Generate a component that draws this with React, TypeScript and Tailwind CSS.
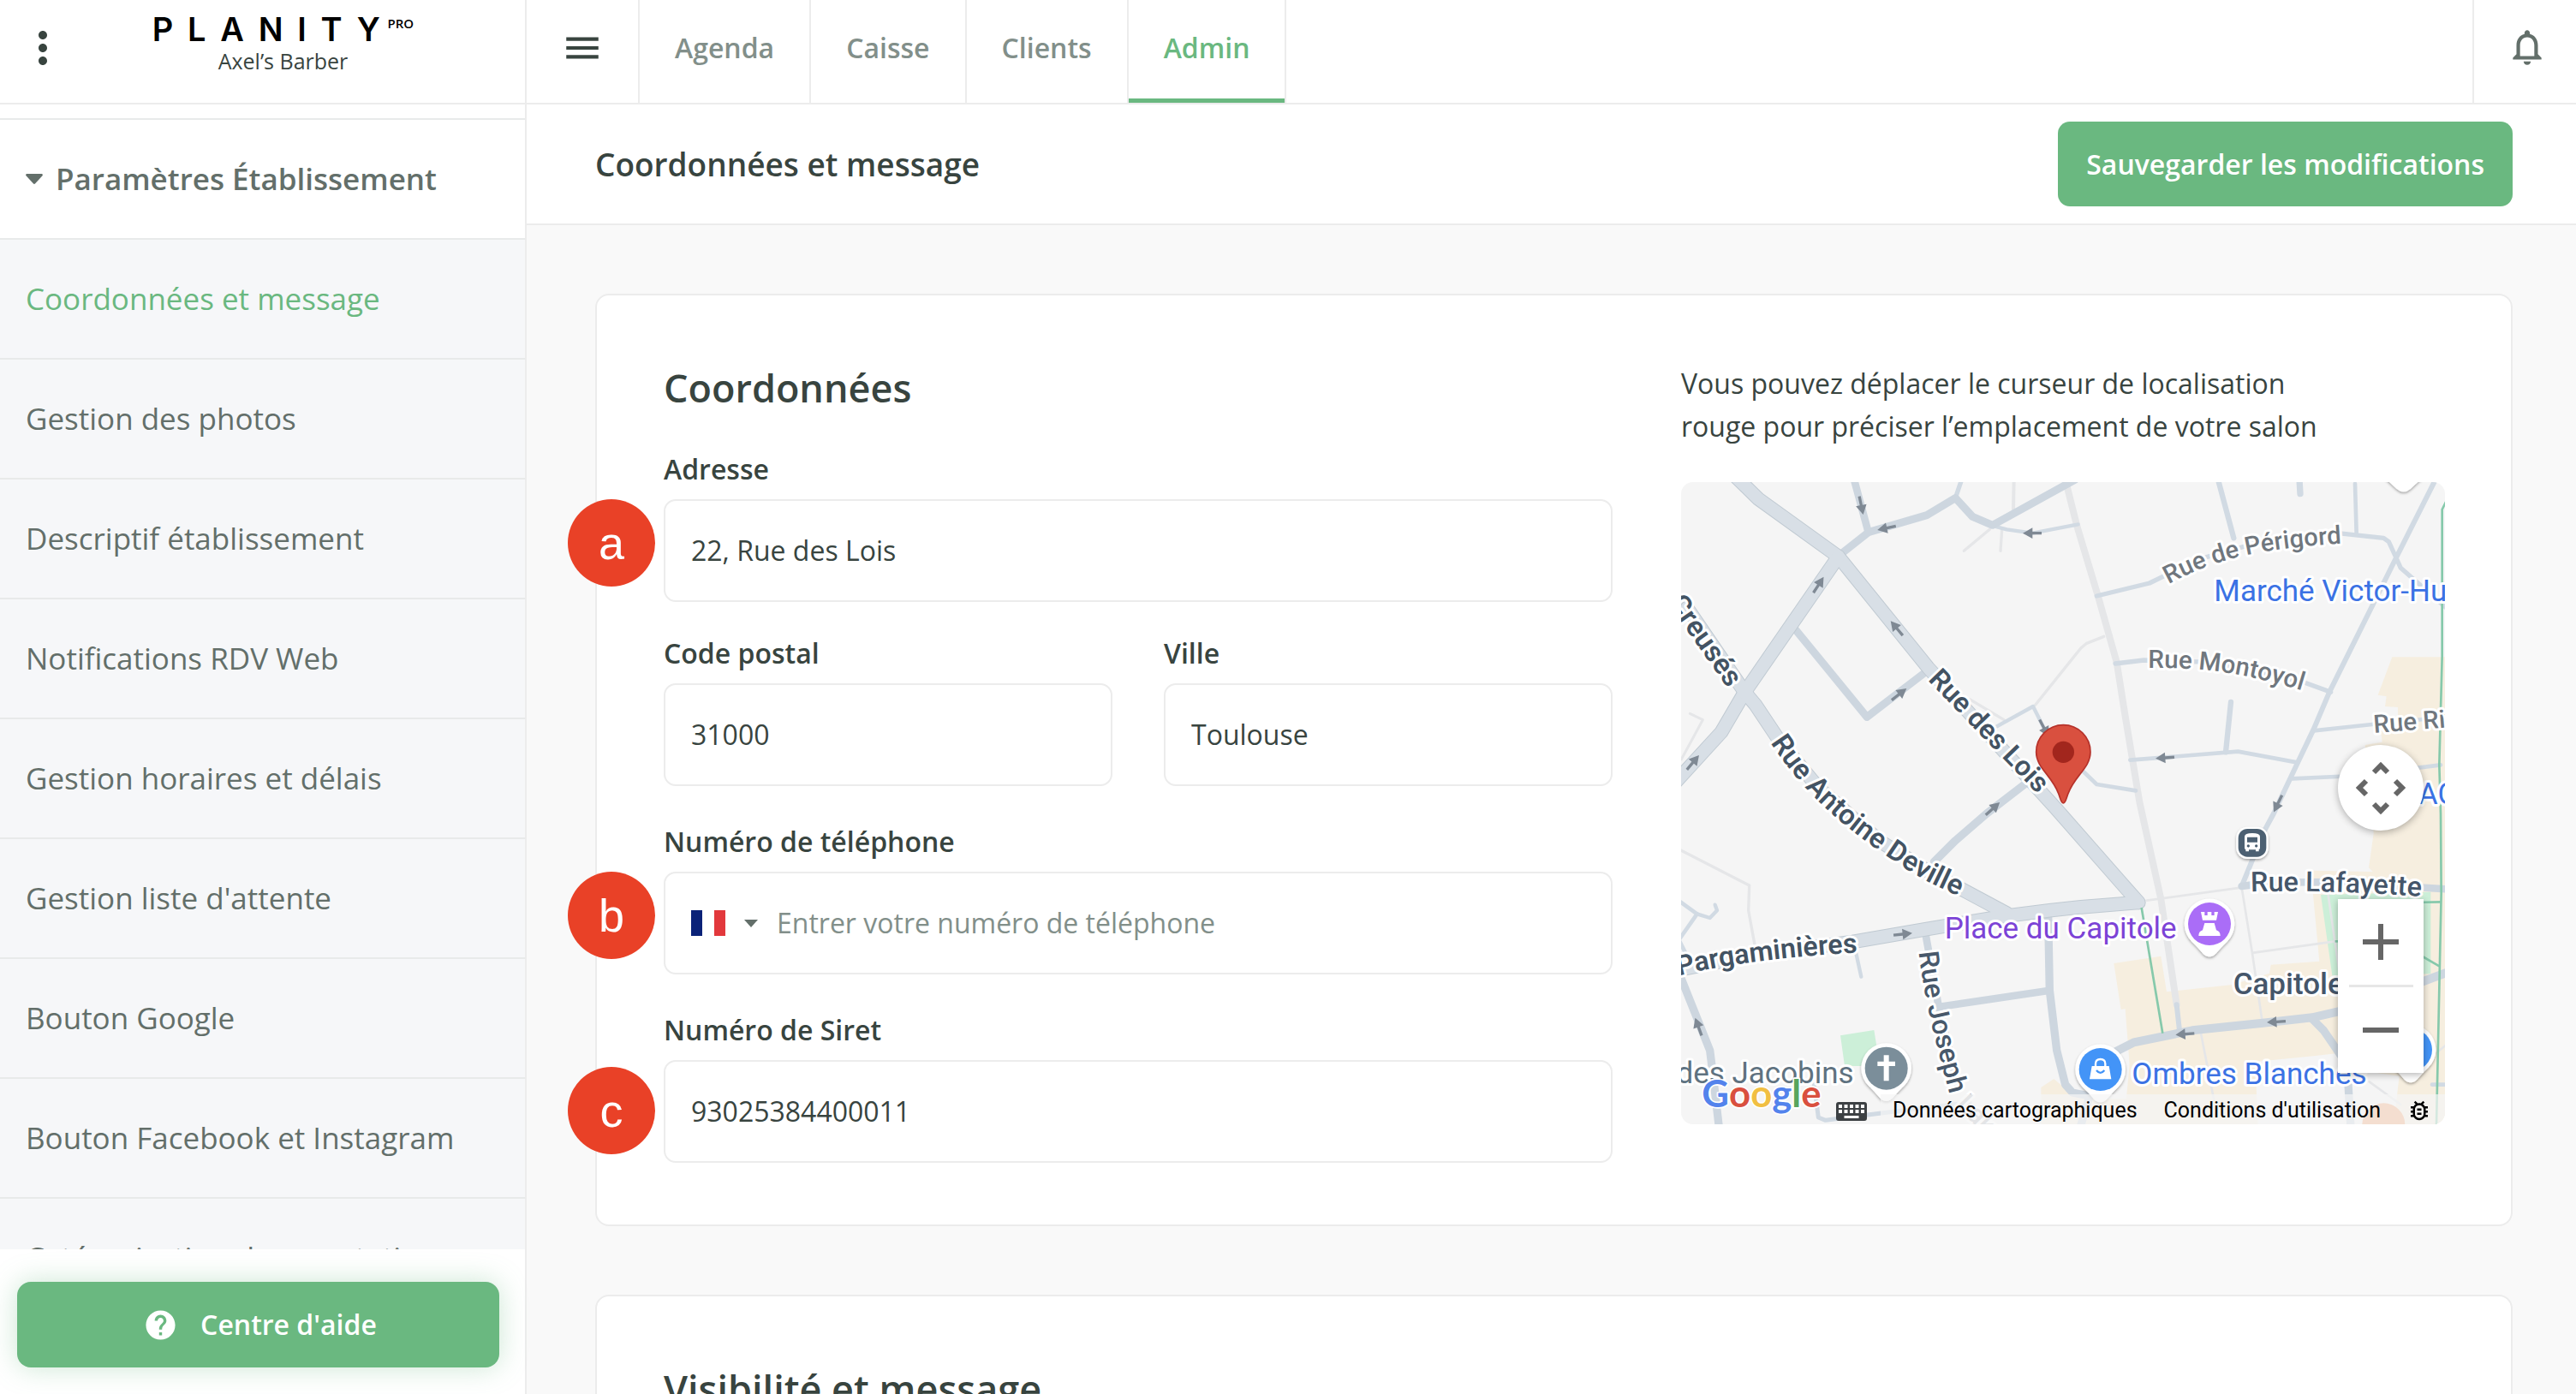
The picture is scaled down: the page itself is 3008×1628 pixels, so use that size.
import type { ReactNode } from "react";
import {
  MdHelp,
  MdMenu,
  MdMoreVert,
  MdNotificationsNone,
  MdOutlineBugReport,
} from "react-icons/md";

const navTabs = ["Agenda", "Caisse", "Clients", "Admin"];

const sidebarItems = [
  "Coordonnées et message",
  "Gestion des photos",
  "Descriptif établissement",
  "Notifications RDV Web",
  "Gestion horaires et délais",
  "Gestion liste d'attente",
  "Bouton Google",
  "Bouton Facebook et Instagram",
  "Catégorisation des prestations",
];

function Sidebar() {
  return (
    <aside className="flex w-[615px] shrink-0 flex-col border-r-2 border-[#ececec] bg-white">
      <div className="flex h-[122px] shrink-0 items-start border-b-2 border-[#ececec] pl-5">
        <button aria-label="Plus d'options" className="flex h-[112px] w-[60px] items-center justify-center text-[#38443f]">
          <MdMoreVert size={60} className="shrink-0" />
        </button>
        <div className="flex flex-1 flex-col items-center pt-3 pr-8">
          <div className="flex items-start text-black">
            <span className="font-['Inter'] text-[38px] leading-[44px] font-semibold tracking-[0.44em]">PLANITY</span>
            <span className="-ml-2 pt-1 text-[15px] leading-[22px] font-semibold">PRO</span>
          </div>
          <div className="text-[25px] leading-[30px] text-[#38443f]">Axel’s Barber</div>
        </div>
      </div>
      <nav className="mt-4 min-h-0 flex-1 overflow-hidden border-t-2 border-[#e8eaea]">
        <button className="flex h-[140px] w-full items-center gap-[15px] border-b-2 border-[#e8eaea] pl-[30px] text-[35px] font-semibold text-[#636f6a]">
          <svg viewBox="0 0 20 12" className="h-3 w-5" fill="currentColor">
            <path d="M1.5 0h17c1.200 0 1.800 1.300 1 2.200L11.200 11.300c-.700.800-1.700.800-2.400 0L.5 2.200C-.300 1.300.300 0 1.500 0z" />
          </svg>
          Paramètres Établissement
        </button>
        <ul>
          {sidebarItems.map((item, i) => (
            <li key={item} className="border-b-2 border-[#e8eaea] bg-[#f6f7f9]">
              <a
                href="#"
                className={
                  i === 0
                    ? "flex h-[138px] items-center pl-[30px] text-[35px] text-[#6ab880]"
                    : "flex h-[138px] items-center pl-[30px] text-[35px] text-[#636f6a]"
                }
              >
                {item}
              </a>
            </li>
          ))}
        </ul>
      </nav>
      <div className="shrink-0 pt-[38px] pr-[30px] pb-[31px] pl-5">
        <button className="flex h-[100px] w-full items-center justify-center gap-[26px] rounded-[16px] bg-[#6ab880] pl-1 text-[32px] font-semibold text-white shadow-[0_0_32px_rgba(106,184,128,0.35)]">
          <MdHelp size={41} />
          Centre d'aide
        </button>
      </div>
    </aside>
  );
}

function TopBar() {
  return (
    <header className="flex h-[122px] shrink-0 border-b-2 border-[#ececec] bg-white">
      <button aria-label="Menu" className="flex w-[132px] items-center justify-center border-r-2 border-[#ececec] pb-2 text-[#38443f]">
        <MdMenu size={50} />
      </button>
      {navTabs.map((tab) => (
        <a
          key={tab}
          href="#"
          className={
            tab === "Admin"
              ? "flex border-r-2 border-[#ececec] text-[32px] font-semibold text-[#6ab880]"
              : "flex items-center border-r-2 border-[#ececec] px-[41px] pb-2 text-[32px] font-semibold text-[#828f8a]"
          }
        >
          {tab === "Admin" ? (
            <span className="flex items-center border-b-[5px] border-[#6ab880] px-[41px] pb-[3px]">{tab}</span>
          ) : (
            tab
          )}
        </a>
      ))}
      <button
        aria-label="Notifications"
        className="ml-auto flex w-[121px] items-center justify-center border-l-2 border-[#ececec] pb-[10px] pl-1 text-[#636f6a]"
      >
        <MdNotificationsNone size={50} />
      </button>
    </header>
  );
}

function Badge({ children, className }: { children: ReactNode; className: string }) {
  return (
    <span
      className={
        "absolute -left-28 flex h-[102px] w-[102px] items-center justify-center rounded-full bg-[#e94127] font-['Liberation_Sans'] text-[54px] leading-none text-white " +
        className
      }
    >
      {children}
    </span>
  );
}

const labelClass = "mb-[10px] block text-[32px] leading-[50px] font-semibold text-[#38443f]";

function Field({
  id,
  label,
  value,
  badge,
}: {
  id: string;
  label: string;
  value: string;
  badge?: ReactNode;
}) {
  return (
    <div>
      <label htmlFor={id} className={labelClass}>
        {label}
      </label>
      <div className="relative">
        {badge}
        <input
          id={id}
          defaultValue={value}
          className="block h-[120px] w-full rounded-[14px] border-2 border-[#ececec] bg-white px-[30px] pb-[2px] text-[32px] text-[#38443f] outline-none"
        />
      </div>
    </div>
  );
}

function PhoneField() {
  return (
    <div>
      <label htmlFor="tel" className={labelClass}>
        Numéro de téléphone
      </label>
      <div className="relative">
        <Badge className="top-0">b</Badge>
        <div className="flex h-[120px] items-center rounded-[14px] border-2 border-[#ececec] bg-white pl-[30px]">
          <button aria-label="Indicatif du pays" className="flex items-center gap-[22px]">
            <span className="flex h-[30px] w-10">
              <span className="flex-1 bg-[#0a2278]" />
              <span className="flex-1 bg-white" />
              <span className="flex-1 bg-[#e2383c]" />
            </span>
            <svg viewBox="0 0 16 9" className="h-[9px] w-4" fill="#636f6a">
              <path d="M0 0h16L8 9z" />
            </svg>
          </button>
          <input
            id="tel"
            type="tel"
            placeholder="Entrer votre numéro de téléphone"
            className="ml-[22px] h-full min-w-0 flex-1 rounded-[14px] bg-transparent pb-[2px] text-[32px] text-[#38443f] outline-none placeholder:text-[#828f8a]"
          />
        </div>
      </div>
    </div>
  );
}

const footways: [string, number][] = [
  ["M1390,50 L1425,190 L1500,440 L1565,670 L1595,860 L1645,1160 L1720,1500 L1775,1870", 24],
  ["M1205,30 L1203,135", 12],
  ["M1120,205 L1030,280", 10],
  ["M1163,205 L1158,280", 10],
  ["M1280,820 L1440,620 L1458,605 L1520,580", 10],
  ["M70,850 L115,872 L40,1010", 9],
  ["M30,1325 L278,1452 L275,1540 L297,1660", 10],
  ["M1050,800 L1170,872", 10],
  ["M1670,1505 L2000,1460", 8],
  ["M2003,1460 L2040,1690 L2075,1930", 8],
  ["M2045,1688 L2330,1648", 8],
  ["M2305,1480 L2350,1790", 8],
  ["M1860,1970 L1905,2200", 8],
  ["M2450,2140 L2560,2220", 8],
  ["M2690,2035 L2720,2010", 8],
];

const lanes: [string, number][] = [
  ["M1000,95 L1022,30", 16],
  ["M1130,192 L1180,205 L1270,218 L1430,187", 13],
  ["M1145,895 L1272,825 L1320,920", 13],
  ["M1920,30 L1975,235", 19],
  ["M2205,30 L2208,80", 22],
  ["M2400,45 L2405,220", 14],
  ["M1495,438 L1680,393 L1850,310 L2100,240 L2340,218 L2500,235 L2518,248 L2542,300 L2560,340 L2720,480", 16],
  ["M2682,30 L2540,312 L2310,775 L2255,905 L2200,1020 L2115,1200 L2080,1265 L2003,1455", 18],
  ["M1560,675 L1660,663 L1900,670 L2220,740 L2315,775", 16],
  ["M1965,810 L1947,985", 19],
  ["M1612,1013 L1990,983 L2200,1022", 14],
  ["M2255,910 L2460,888 L2720,862", 14],
  ["M2180,1078 L2400,1068 L2700,1030", 14],
  ["M1440,1045 L1495,1098 L1632,1120", 14],
  ["M1775,1870 L1785,1960", 18],
  ["M30,1505 L95,1552 L30,1645", 14],
  ["M95,1552 L140,1566 L165,1540 L158,1520", 13],
  ["M30,1640 L60,1700", 14],
  ["M652,1690 L670,1772", 13],
  ["M505,2150 L520,2265 L545,2275 L740,2250 L1050,2213", 15],
  ["M2670,2150 L2720,2150", 14],
];

const streets: [string, number][] = [
  ["M645,30 L695,215", 26],
  ["M600,290 L695,215 L900,155 L1000,95 L1060,160 L1130,190 L1420,30", 27],
  ["M435,550 L690,862 L895,705", 27],
  ["M925,1370 L1000,1295 L1110,1200 L1240,1100", 28],
  ["M40,1780 L140,2030 L150,2110 L172,2300", 28],
  ["M895,1620 L940,1870 L1010,2160", 26],
  ["M940,1878 L1330,1820", 26],
  ["M1325,1560 L1330,1820 L1355,2030 L1385,2150 L1410,2178 L1470,2190 L1440,2290", 28],
  ["M2003,1455 L2100,1442 L2330,1440 L2720,1465", 26],
  ["M1560,2035 L1625,2002 L1830,1960 L2070,1935 L2250,1915 L2380,1885 L2720,1758", 30],
  ["M2250,1920 L2290,1960 L2372,2080 L2385,2300", 28],
];

const avenues = [
  "M230,20 L310,98 L590,300 L905,690 L1350,1180 L1600,1465 L1642,1512",
  "M590,300 L262,775 L180,915 L20,1090",
  "M60,480 L262,775 L300,820 L380,940 L520,1110 L640,1215 L740,1300 L900,1400 L1040,1475 L1180,1550",
  "M20,1750 L300,1695 L640,1650 L900,1605 L1170,1560 L1330,1540 L1440,1528 L1640,1512",
];

const blocks = [
  "M2530,652 H2720 V1420 L2470,1412 L2448,1390 L2465,1270 L2435,960 L2495,950 L2490,910 L2550,900 V828 L2505,825 L2510,790 L2480,785Z",
  "M2245,1400 L2450,1404 L2720,1410 V2290 H2535 L2555,2120 L2480,2110 L2560,2040 L2400,2020 L2340,2040 L2255,2050 L2050,2070 L2060,2290 H1590 L1610,2080 L1595,1885 L1580,1887 L1555,1725 L1720,1700 L1740,1825 L1970,1800 L2100,1760 L2105,1730 L2275,1718Z",
  "M1300,2290 V2160 L1345,2130 L1380,2160 L1480,2200 L1600,2200 V2290Z",
];

const oneWayArrows = [
  [670, 120, 78],
  [760, 200, 168],
  [1270, 218, 180],
  [520, 400, -57],
  [795, 552, -130],
  [802, 783, -38],
  [80, 1022, -50],
  [1130, 1184, -42],
  [1310, 900, 62],
  [1735, 1005, 176],
  [2130, 1165, 116],
  [815, 1623, -6],
  [100, 1948, -110],
  [2125, 1930, 176],
  [1805, 1973, 176],
];

function Pin({ x, y, color, children }: { x: number; y: number; color: string; children?: ReactNode }) {
  return (
    <g transform={`translate(${x} ${y})`}>
      <path
        d="M0,115 C-22,115 -28,92 -62,62 A88,88 0 1 1 62,62 C28,92 22,115 0,115Z"
        fill="#fff"
        filter="url(#pin-shadow)"
      />
      <circle r="75" fill={color} />
      {children}
    </g>
  );
}

function StreetLabel({
  id,
  d,
  size,
  weight = 500,
  fill,
  end,
  children,
}: {
  id: string;
  d: string;
  size: number;
  weight?: number;
  fill: string;
  end?: boolean;
  children: string;
}) {
  return (
    <>
      <path id={id} d={d} fill="none" />
      <text
        fontSize={size}
        fontWeight={weight}
        fill={fill}
        stroke="#fff"
        strokeWidth="18"
        strokeLinejoin="round"
        paintOrder="stroke"
        textAnchor={end ? "end" : "start"}
      >
        <textPath href={"#" + id} startOffset={end ? "100%" : "0%"}>
          {children}
        </textPath>
      </text>
    </>
  );
}

function MapDrawing() {
  const halo = { stroke: "#fff", strokeWidth: 18, strokeLinejoin: "round", paintOrder: "stroke" } as const;
  return (
    <svg viewBox="39 39 2676 2250" preserveAspectRatio="xMidYMid slice" className="block h-full w-full font-['Roboto']">
      <defs>
        <filter id="pin-shadow" x="-30%" y="-30%" width="160%" height="160%">
          <feDropShadow dx="0" dy="5" stdDeviation="5" floodColor="#000" floodOpacity="0.35" />
        </filter>
      </defs>
      <rect x="0" y="0" width="2760" height="2330" fill="#f5f5f5" />
      <g fill="#f6eedf">
        {blocks.map((d) => (
          <path key={d} d={d} />
        ))}
      </g>
      <g fill="#ccefd8">
        <path d="M597,1978 L715,1959 L728,2040 L668,2085 H612Z" />
        <path d="M2280,1485 L2665,1475 V1762 L2320,1768Z" />
      </g>
      <g fill="none" strokeLinecap="round" strokeLinejoin="round">
        {footways.map(([d, w]) => (
          <path key={d} d={d} stroke="#e5e6e8" strokeWidth={w} />
        ))}
        {lanes.map(([d, w]) => (
          <path key={d} d={d} stroke="#d1dae3" strokeWidth={w} />
        ))}
        {streets.map(([d, w]) => (
          <path key={d} d={d} stroke="#cdd6df" strokeWidth={w} />
        ))}
        {avenues.map((d) => (
          <path key={d} d={d} stroke="#c0cad2" strokeWidth="50" />
        ))}
        {avenues.map((d) => (
          <path key={d} d={d} stroke="#d8dfe6" strokeWidth="44" />
        ))}
      </g>
      <g fill="none" stroke="#86c9ab" strokeWidth="8">
        <path d="M2720,105 L2705,135 V650 L2695,1030 L2700,1200 L2702,1480 L2685,2290" />
        <path d="M1652,1530 L1726,1970" />
        <path d="M2600,1512 L2702,1510" />
        <path d="M2600,1680 L2695,1735" />
        <path d="M2330,1648 H2370" />
      </g>
      <g fill="#7f8994">
        {oneWayArrows.map(([x, y, r]) => (
          <path
            key={`${x}-${y}`}
            transform={`translate(${x} ${y}) rotate(${r})`}
            d="M34,0 L0,-19 V-5 H-32 V5 H0 V19Z"
          />
        ))}
      </g>

      <StreetLabel id="creuses" d="M-7,464 L203,762" size={100} weight={600} fill="#435363" end>Creusés</StreetLabel>
      <StreetLabel id="lois" d="M902,733 L1330,1176" size={97} weight={600} fill="#435363">Rue des Lois</StreetLabel>
      <StreetLabel
        id="deville"
        d="M352,952 C470,1130 600,1240 760,1350 S940,1450 1100,1535"
        size={99}
        weight={600}
        fill="#435363"
      >
        Rue Antoine Deville
      </StreetLabel>
      <StreetLabel
        id="pargaminieres"
        d="M-120,1812 C90,1742 300,1710 657,1687"
        size={97}
        weight={600}
        fill="#435363"
        end
      >
        Pargaminières
      </StreetLabel>
      <StreetLabel id="lakanal" d="M1000,2222 L1200,2430" size={95} fill="#b9bcc2">Lakanal</StreetLabel>
      <StreetLabel id="joseph" d="M872,1686 C890,1850 920,1960 1000,2260" size={97} fill="#48586a">
        Rue Joseph
      </StreetLabel>
      <StreetLabel id="perigord" d="M1747,397 C1870,330 2010,270 2400,252" size={88} fill="#70777e">
        Rue de Périgord
      </StreetLabel>
      <StreetLabel id="montoyol" d="M1675,690 C1870,690 2000,700 2280,790" size={89} fill="#70777e">
        Rue Montoyol
      </StreetLabel>
      <StreetLabel id="rivals" d="M2467,918 L2900,885" size={88} fill="#70777e">Rue Rivals</StreetLabel>
      <StreetLabel id="lafayette" d="M2035,1474 Q2330,1466 2700,1496" size={97} fill="#45566a">
        Rue Lafayette
      </StreetLabel>

      <g {...halo}>
        <text x="1906" y="455" fontSize="105" fill="#3b72e4">Marché Victor-Hugo</text>
        <text x="2622" y="1168" fontSize="104" fill="#3b72e4">AC</text>
        <text x="962" y="1638" fontSize="105" fill="#7c43d6">Place du Capitole</text>
        <text x="1973" y="1833" fontSize="105" fontWeight="500" fill="#45566a">Capitole</text>
        <text x="1618" y="2147" fontSize="105" fill="#3b72e4">Ombres Blanches</text>
        <text x="644" y="2144" fontSize="105" fill="#5f7280" textAnchor="end">des Jacobins</text>
      </g>

      <path d="M2500,20 L2545,62 Q2570,84 2595,62 L2640,20Z" fill="#fff" filter="url(#pin-shadow)" />
      <circle cx="2500" cy="2290" r="75" fill="#f0a878" />

      <Pin x={758} y={2093} color="#7b8e9a">
        <path d="M-9,-46 H9 V-24 H31 V-8 H9 V44 H-9 V-8 H-31 V-24 H-9Z" fill="#fff" />
      </Pin>
      <Pin x={1890} y={1587} color="#aa6df7">
        <path
          d="M-30,-42 H-17 V-30 H-7 V-42 H7 V-30 H17 V-42 H30 L24,-13 H-24Z M-17,-3 H17 L24,22 Q38,26 38,42 H-38 Q-38,26 -24,22Z"
          fill="#fff"
        />
      </Pin>
      <Pin x={1508} y={2097} color="#4394f7">
        <path d="M-30,-12 H30 L38,34 H-38Z" fill="#fff" />
        <path d="M-17,-10 V-20 Q-17,-36 0,-36 Q17,-36 17,-20 V-10" fill="none" stroke="#fff" strokeWidth="7" />
        <path d="M-14,3 Q0,20 14,3" fill="none" stroke="#4394f7" strokeWidth="7" />
      </Pin>
      <Pin x={2595} y={2028} color="#4394f7" />

      <g transform="translate(2040 1303)">
        <rect x="-56" y="-56" width="112" height="112" rx="38" fill="#fff" filter="url(#pin-shadow)" />
        <rect x="-49" y="-49" width="98" height="98" rx="32" fill="#4c6072" />
        <path
          fillRule="evenodd"
          d="M-27,-22 Q-27,-34 0,-34 Q27,-34 27,-22 V18 Q27,22 23,24 V30 H12 V24 H-12 V30 H-23 V24 Q-27,22 -27,18Z M-18,-20 V-2 H18 V-20Z M-14,6 a5,5 0 1 0 .1,0Z M14,6 a5,5 0 1 0 .1,0Z"
          fill="#fff"
        />
      </g>

      <g transform="translate(1378 985)">
        <path
          d="M0,179 C-8,179 -11,160 -17,145 C-40,82 -95,55 -95,0 A95,95 0 0 1 95,0 C95,55 40,82 17,145 C11,160 8,179 0,179Z"
          fill="#d9503f"
          stroke="#b6322a"
          strokeWidth="5"
        />
        <circle r="38" fill="#a2261d" />
      </g>

      <text x="112" y="2229" fontSize="131" fontWeight="700" className="font-['Lato']" {...halo} strokeWidth={10}>
        <tspan fill="#5383ec">G</tspan>
        <tspan fill="#d9503f">o</tspan>
        <tspan fill="#f1bf42">o</tspan>
        <tspan fill="#5383ec">g</tspan>
        <tspan fill="#58a55c">l</tspan>
        <tspan fill="#d9503f">e</tspan>
      </text>
    </svg>
  );
}

function SalonMap() {
  return (
    <div className="relative h-[750px] overflow-hidden rounded-[14px]">
      <MapDrawing />
      <div className="absolute right-0 bottom-0 flex h-[35px] items-center font-['Roboto'] text-[25px] text-black">
        <button aria-label="Raccourcis clavier" className="mt-1 mr-4">
          <svg viewBox="0 0 36 22" className="h-[22px] w-9">
            <rect width="36" height="22" rx="3" fill="#3c4043" />
            <path
              d="M3 3h4v4H3zM9.500 3h4v4h-4zM16 3h4v4h-4zM22.500 3h4v4h-4zM29 3h4v4h-4zM3 9h4v4H3zM9.500 9h4v4h-4zM16 9h4v4h-4zM22.500 9h4v4h-4zM29 9h4v4h-4zM9.500 16h17v3h-17z"
              fill="#fff"
            />
          </svg>
        </button>
        <div className="flex h-full items-center bg-[#f5f5f5]/70 pt-[3px] pr-[15px] pl-[14px]">
          <a href="#">Données cartographiques</a>
          <a href="#" className="ml-[31px]">Conditions d'utilisation</a>
          <a href="#" aria-label="Signaler une erreur" className="ml-[30px]">
            <MdOutlineBugReport size={30} />
          </a>
        </div>
      </div>
      <button
        aria-label="Déplacer la carte"
        className="absolute top-[307px] right-[25px] h-[100px] w-[100px] rounded-full bg-white shadow-[0_2px_8px_rgba(0,0,0,0.3)]"
      >
        <svg viewBox="0 0 100 100" fill="none" stroke="#666" strokeWidth="6" className="h-full w-full">
          <path d="M42 32l8-8 8 8M42 69l8 8 8-8M33 42l-8 8 8 8M67 42l8 8-8 8" />
        </svg>
      </button>
      <div className="absolute right-[25px] bottom-[60px] flex w-[100px] flex-col items-center bg-white shadow-[0_2px_8px_rgba(0,0,0,0.3)]">
        <button aria-label="Zoom avant" className="h-[100px] w-full">
          <svg viewBox="0 0 100 100" stroke="#666" strokeWidth="6" className="h-full w-full">
            <path d="M29 50h42M50 29v42" />
          </svg>
        </button>
        <div className="h-[3px] w-[75px] bg-[#e6e6e6]" />
        <button aria-label="Zoom arrière" className="h-[100px] w-full">
          <svg viewBox="0 0 100 100" stroke="#666" strokeWidth="6" className="h-full w-full">
            <path d="M29 50h42" />
          </svg>
        </button>
      </div>
    </div>
  );
}

export default function App() {
  return (
    <div className="flex h-screen overflow-hidden bg-[#f9f9f9] font-['Open_Sans',sans-serif]">
      <Sidebar />
      <div className="flex min-w-0 flex-1 flex-col">
        <TopBar />
        <div className="flex h-[141px] shrink-0 items-center justify-between border-b-2 border-[#ececec] bg-white pr-[74px] pl-20">
          <h1 className="text-[37px] font-semibold text-[#38443f]">Coordonnées et message</h1>
          <button className="h-[99px] rounded-[14px] bg-[#6ab880] px-[33px] text-[32px] font-semibold text-white">
            Sauvegarder les modifications
          </button>
        </div>
        <main className="flex min-h-0 flex-1 flex-col gap-20 overflow-hidden pt-20 pr-[74px] pl-20">
          <section className="grid shrink-0 grid-cols-[1108fr_892fr] gap-20 rounded-[16px] border-2 border-[#ececec] bg-white pt-[78px] pr-[77px] pb-[72px] pl-[78px]">
            <div>
              <h2 className="mb-10 text-[45px] leading-[60px] font-semibold text-[#38443f]">Coordonnées</h2>
              <div className="flex flex-col gap-10">
                <div className="flex flex-col gap-[35px]">
                  <Field id="adresse" label="Adresse" value="22, Rue des Lois" badge={<Badge className="top-0">a</Badge>} />
                  <div className="grid grid-cols-2 gap-[60px]">
                    <Field id="code-postal" label="Code postal" value="31000" />
                    <Field id="ville" label="Ville" value="Toulouse" />
                  </div>
                </div>
                <PhoneField />
                <Field
                  id="siret"
                  label="Numéro de Siret"
                  value="93025384400011"
                  badge={<Badge className="top-2">c</Badge>}
                />
              </div>
            </div>
            <div>
              <p className="mb-10 max-w-[800px] text-[32px] leading-[50px] text-[#38443f]">
                Vous pouvez déplacer le curseur de localisation rouge pour préciser l’emplacement de votre salon
              </p>
              <SalonMap />
            </div>
          </section>
          <section className="shrink-0 rounded-[16px] border-2 border-[#ececec] bg-white p-[78px]">
            <h2 className="text-[45px] leading-[60px] font-semibold text-[#38443f]">Visibilité et message</h2>
          </section>
        </main>
      </div>
    </div>
  );
}
